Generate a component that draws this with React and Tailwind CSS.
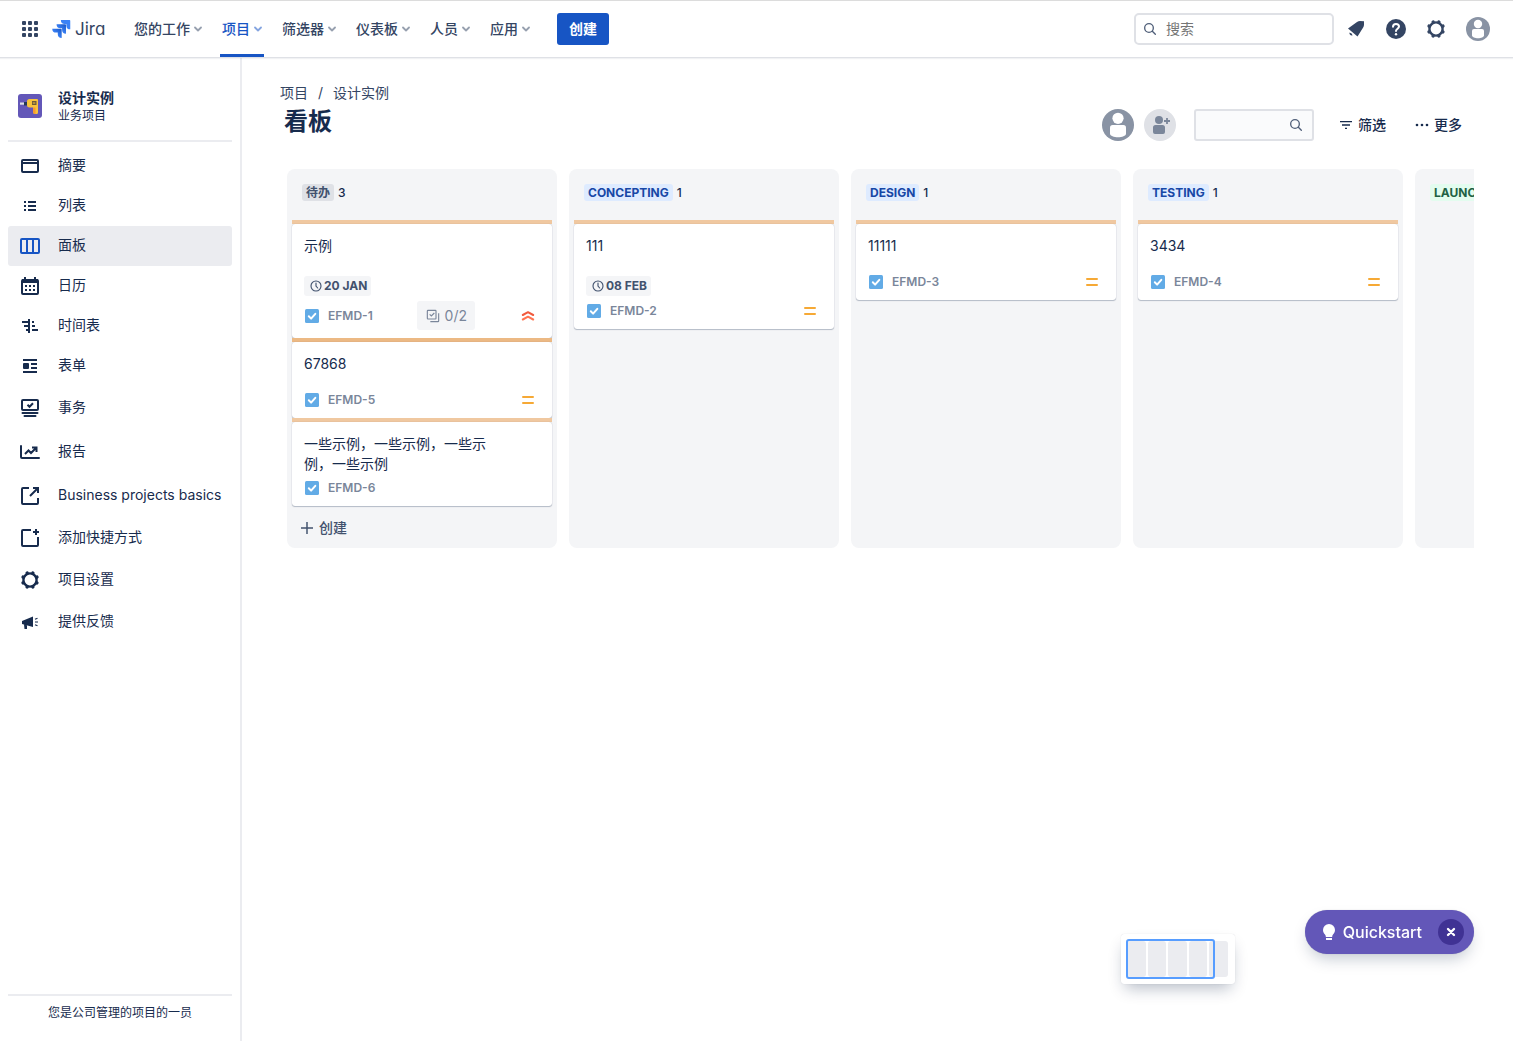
import React, { useState } from "react";

const Svg = ({ size = 24, className = "", children }) => (
  <svg
    width={size}
    height={size}
    viewBox="0 0 24 24"
    fill="none"
    aria-hidden="true"
    className={`shrink-0 ${className}`}
  >
    {children}
  </svg>
);

const SummaryIcon = () => (
  <Svg>
    <rect x="4" y="6" width="16" height="12" rx="1" stroke="currentColor" strokeWidth="2" />
    <path d="M4 9h16" stroke="currentColor" strokeWidth="2" />
    <path d="M5 7.500h1.500M8 7.500h11" stroke="white" strokeWidth="1.200" />
  </Svg>
);

const ListIcon = () => (
  <Svg>
    <path d="M6 8h2M6 12h2M6 16h2M10 8h8M10 12h8M10 16h8" stroke="currentColor" strokeWidth="2" />
  </Svg>
);

const BoardIcon = () => (
  <Svg className="text-[#1755c4]">
    <rect x="3" y="5" width="18" height="14" rx="1" stroke="currentColor" strokeWidth="2" />
    <path d="M9 5v14M15 5v14" stroke="currentColor" strokeWidth="2" />
  </Svg>
);

const CalendarIcon = () => (
  <Svg>
    <rect x="4" y="6" width="16" height="14" rx="1" stroke="currentColor" strokeWidth="2" />
    <path d="M4 5h16v4H4zM6 3h2v3H6zM16 3h2v3h-2z" fill="currentColor" />
    <path d="M7 12h2M11 12h2M15 12h2M7 16h2M11 16h2M15 16h2" stroke="currentColor" strokeWidth="2" />
  </Svg>
);

const TimelineIcon = () => (
  <Svg>
    <path d="M11 5v14M4 8h7M6 12h5M8 16h3M14 8h2M14 12h3M14 16h6" stroke="currentColor" strokeWidth="2" />
  </Svg>
);

const FormIcon = () => (
  <Svg>
    <path d="M5 6h14M5 18h14M13 10h6M13 14h6" stroke="currentColor" strokeWidth="2" />
    <rect x="5" y="9" width="6" height="6" rx="1" fill="currentColor" />
  </Svg>
);

const IssuesIcon = () => (
  <Svg>
    <rect x="4" y="4" width="16" height="10" rx="1" stroke="currentColor" strokeWidth="2" />
    <path d="m9.500 8.800 2 2 3.500-3.500" stroke="currentColor" strokeWidth="2" />
    <path d="M4.500 17h15M6.500 20h11" stroke="currentColor" strokeWidth="2" strokeLinecap="round" />
  </Svg>
);

const ReportsIcon = () => (
  <Svg>
    <path d="M3 6v11a1 1 0 0 0 1 1h17" stroke="currentColor" strokeWidth="2" strokeLinecap="round" />
    <path d="m7 14 3.500-3.500 2.500 2.500 5-5M14 7.500h4.500V12" stroke="currentColor" strokeWidth="2" />
  </Svg>
);

const ExternalIcon = () => (
  <Svg>
    <path d="M11 4H5a1 1 0 0 0-1 1v14a1 1 0 0 0 1 1h14a1 1 0 0 0 1-1v-5" stroke="currentColor" strokeWidth="2" />
    <path d="M15 4h5v5M20 4l-8 8" stroke="currentColor" strokeWidth="2" />
  </Svg>
);

const AddShortcutIcon = () => (
  <Svg>
    <path d="M13 4H5a1 1 0 0 0-1 1v14a1 1 0 0 0 1 1h14a1 1 0 0 0 1-1v-8" stroke="currentColor" strokeWidth="2" />
    <path d="M18 3v6M15 6h6" stroke="currentColor" strokeWidth="2" />
  </Svg>
);

const GearIcon = () => (
  <Svg>
    <circle cx="12" cy="12" r="6.600" stroke="currentColor" strokeWidth="2.400" />
    <circle
      cx="12"
      cy="12"
      r="7.500"
      stroke="currentColor"
      strokeWidth="3.400"
      strokeLinecap="round"
      pathLength="8"
      strokeDasharray="0.010 0.990"
      transform="rotate(22.5 12 12)"
    />
  </Svg>
);

const FeedbackIcon = () => (
  <Svg>
    <path d="M4 11 15 6.500v10.500L4 14zM6 14.500l3 1v3.500H6.500z" fill="currentColor" />
    <path d="M17 12h3M17 9.300l2.500-1M17 14.700l2.500 1" stroke="currentColor" strokeWidth="1.200" />
  </Svg>
);

const SearchIcon = () => (
  <Svg size={16} className="text-[#505f79]">
    <circle cx="10.500" cy="10.500" r="6.500" stroke="currentColor" strokeWidth="2" />
    <path d="m15.500 15.500 4.500 4.500" stroke="currentColor" strokeWidth="2" strokeLinecap="round" />
  </Svg>
);

const ChevronIcon = () => (
  <svg width="8" height="8" viewBox="0 0 8 8" fill="none" aria-hidden="true">
    <path d="m1 2.500 3 3 3-3" stroke="currentColor" strokeWidth="1.800" strokeLinecap="round" strokeLinejoin="round" />
  </svg>
);

const Avatar = ({ size }) => (
  <Svg size={size} className="text-[#8993a4]">
    <circle cx="12" cy="12" r="12" fill="currentColor" />
    <circle cx="12" cy="7" r="4.200" fill="white" />
    <path d="M6 14a2 2 0 0 1 2-2h8a2 2 0 0 1 2 2v4.500c0 1.500-3 2.700-6 2.700s-6-1.200-6-2.700z" fill="white" />
  </Svg>
);

const ProjectIcon = () => (
  <Svg>
    <rect width="24" height="24" rx="3" fill="#6357b8" />
    <path d="M6 8h3v3.500H6z" fill="#253858" />
    <path d="M2 8.500h4v2.200H2z" fill="#dfe1e6" />
    <path
      d="M9 7.500A2.500 2.500 0 0 1 11.500 5H19a1 1 0 0 1 1 1v12.500a1.500 1.500 0 0 1-1.500 1.500H17a2 2 0 0 1-2-2v-4.500h-3.500A2.500 2.500 0 0 1 9 11z"
      fill="#f7c33c"
    />
    <path d="M15 13.500h2.500V20H17a2 2 0 0 1-2-2z" fill="#f79a2e" />
    <path d="M14 7h4.500v4H14z" fill="#6b5b3a" />
    <path d="M14.800 9h2.500" stroke="#f7c33c" strokeWidth="1" />
  </Svg>
);

const TaskIcon = () => (
  <svg width="16" height="16" viewBox="0 0 16 16" fill="none" aria-hidden="true" className="shrink-0">
    <rect x="1" y="1" width="14" height="14" rx="1.500" fill="#62abe6" />
    <path d="m4.800 8.300 2.300 2.300 4.200-4.800" stroke="white" strokeWidth="2" strokeLinecap="round" strokeLinejoin="round" />
  </svg>
);

const Priority = ({ level }) => {
  if (!level) return null;
  return (
    <svg width="16" height="16" viewBox="0 0 16 16" fill="none" role="img" aria-label={level}>
      {level === "highest" ? (
        <>
          <path d="m2.800 7 5.200-2.800 5.200 2.800" stroke="#f15b3e" strokeWidth="2" strokeLinecap="round" strokeLinejoin="round" />
          <path d="m2.800 11.500 5.200-2.800 5.200 2.800" stroke="#ff7452" strokeWidth="2" strokeLinecap="round" strokeLinejoin="round" />
        </>
      ) : (
        <path d="M3 5h10M3 11h10" stroke="#f6a935" strokeWidth="2" strokeLinecap="round" />
      )}
    </svg>
  );
};

const topNav = [
  { label: "您的工作" },
  { label: "项目", active: true },
  { label: "筛选器" },
  { label: "仪表板" },
  { label: "人员" },
  { label: "应用" },
];

const views = [
  { label: "摘要", icon: SummaryIcon },
  { label: "列表", icon: ListIcon },
  { label: "面板", icon: BoardIcon },
  { label: "日历", icon: CalendarIcon },
  { label: "时间表", icon: TimelineIcon },
  { label: "表单", icon: FormIcon },
];

const tools = [
  { label: "事务", icon: IssuesIcon },
  { label: "报告", icon: ReportsIcon },
  { label: "Business projects basics", icon: ExternalIcon },
];

const extras = [
  { label: "添加快捷方式", icon: AddShortcutIcon },
  { label: "项目设置", icon: GearIcon },
  { label: "提供反馈", icon: FeedbackIcon },
];

const columns = [
  {
    name: "待办",
    tone: "bg-[#dfe1e6] text-[#42526e]",
    canCreate: true,
    cards: [
      { id: "EFMD-1", title: "示例", due: "20 JAN", subtasks: "0/2", priority: "highest", bar: "bg-[#f0c8a0]" },
      { id: "EFMD-5", title: "67868", priority: "medium", bar: "bg-[#ecb984]" },
      { id: "EFMD-6", title: "一些示例，一些示例，一些示例，一些示例", long: true, bar: "bg-[#f0c8a0]" },
    ],
  },
  {
    name: "CONCEPTING",
    tone: "bg-[#deebff] text-[#1747a6]",
    cards: [{ id: "EFMD-2", title: "111", due: "08 FEB", priority: "medium", bar: "bg-[#f0c8a0]" }],
  },
  {
    name: "DESIGN",
    tone: "bg-[#deebff] text-[#1747a6]",
    cards: [{ id: "EFMD-3", title: "11111", priority: "medium", bar: "bg-[#f0c8a0]" }],
  },
  {
    name: "TESTING",
    tone: "bg-[#deebff] text-[#1747a6]",
    cards: [{ id: "EFMD-4", title: "3434", priority: "medium", bar: "bg-[#f0c8a0]" }],
  },
  { name: "LAUNCH", tone: "bg-[#e3fcef] text-[#216144]", cards: [] },
];

const Header = () => (
  <header className="relative z-10 flex h-[58px] items-stretch border-t border-b border-t-[#dcdcdc] border-b-[#dfe1e6] bg-white pr-[19px] pl-[18px] text-[#344563] shadow-[0_1px_1px_rgba(9,30,66,0.06)]">
    <button aria-label="切换到" className="flex w-6 items-center justify-center">
      <Svg>
        <g fill="currentColor">
          {[4, 10, 16].map((y) =>
            [4, 10, 16].map((x) => <rect key={`${x}-${y}`} x={x} y={y} width="4" height="4" rx="1" />)
          )}
        </g>
      </Svg>
    </button>
    <a href="#" className="ml-2.5 flex w-[54px] items-center gap-[3px]">
      <svg width="20" height="18" viewBox="0 0 26 24" aria-hidden="true" className="shrink-0">
        <defs>
          <linearGradient id="jira-fade" x1="1" y1="0" x2="0.400" y2="0.600">
            <stop offset="0" stopColor="#1755c4" />
            <stop offset="1" stopColor="#3b82f6" />
          </linearGradient>
        </defs>
        <path
          fill="url(#jira-fade)"
          d="M11.571 11.513H0a5.218 5.218 0 0 0 5.232 5.215h2.130v2.057A5.215 5.215 0 0 0 12.575 24V12.518a1.005 1.005 0 0 0-1.005-1.005z"
        />
        <path
          fill="url(#jira-fade)"
          d="M17.294 5.757H5.736a5.215 5.215 0 0 0 5.215 5.214h2.129v2.058a5.218 5.218 0 0 0 5.215 5.214V6.758a1.001 1.001 0 0 0-1.001-1.001z"
        />
        <path
          fill="#3b82f6"
          d="M23.013 0H11.455a5.215 5.215 0 0 0 5.215 5.215h2.129v2.057A5.215 5.215 0 0 0 24 12.483V1.005A1.001 1.001 0 0 0 23.013 0Z"
        />
      </svg>
      <span className="text-[17px] leading-6 [font-feature-settings:'cv11']">Jira</span>
    </a>
    <nav className="ml-[26px] flex gap-4">
      {topNav.map((item) => (
        <button
          key={item.label}
          className={`flex items-center gap-1 border-b-3 px-0.5 pt-[3px] text-sm font-medium whitespace-nowrap ${
            item.active ? "border-[#1755c4] text-[#1755c4]" : "border-transparent"
          }`}
        >
          {item.label}
          <span className={item.active ? "text-[#85a5e0]" : "text-[#97a0af]"}>
            <ChevronIcon />
          </span>
        </button>
      ))}
    </nav>
    <button className="ml-[25px] h-8 self-center rounded-[3px] bg-[#1755c4] px-3 text-sm font-semibold whitespace-nowrap text-white">
      创建
    </button>
    <div className="ml-auto flex items-center gap-2">
      <label className="-mr-0.5 flex h-8 w-[200px] items-center gap-2 rounded-[5px] border-2 border-[#dfe1e6] px-1.5">
        <SearchIcon />
        <input
          type="text"
          aria-label="搜索"
          placeholder="搜索"
          className="w-full min-w-0 bg-transparent text-sm outline-none placeholder:text-[#757575]"
        />
      </label>
      <button aria-label="通知" className="flex size-8 items-center justify-center">
        <Svg>
          <path d="M4 11.500 13 5c1-.8 2-1 3-1l4 .3v3.500c0 1-.3 2-1 3l-5.500 8.700z" fill="currentColor" />
          <path d="M5.500 15.500c-.5 1.500 1 3.500 3 3l-.6-1.800z" fill="currentColor" />
        </Svg>
      </button>
      <button aria-label="帮助" className="flex size-8 items-center justify-center">
        <Svg>
          <circle cx="12" cy="12" r="10" fill="currentColor" />
          <path
            d="M9 9.800C9 8 10.300 7 12 7s3 1.100 3 2.600c0 2-3 2.200-3 4.400"
            stroke="white"
            strokeWidth="2"
            strokeLinecap="round"
          />
          <circle cx="12" cy="17.200" r="1.200" fill="white" />
        </Svg>
      </button>
      <button aria-label="设置" className="flex size-8 items-center justify-center">
        <GearIcon />
      </button>
      <button aria-label="个人资料" className="ml-0.5 flex size-8 items-center justify-center">
        <Avatar size={24} />
      </button>
    </div>
  </header>
);

const SideItem = ({ item, active, onSelect, height }) => {
  const Icon = item.icon;
  return (
    <li>
      <a
        href="#"
        onClick={onSelect}
        className={`flex items-center gap-4 rounded-[3px] px-2.5 text-sm ${height} ${active ? "bg-[#ebecf0]" : ""}`}
      >
        <Icon />
        <span className="pb-0.5 whitespace-nowrap">{item.label}</span>
      </a>
    </li>
  );
};

const Sidebar = () => {
  const [view, setView] = useState("面板");

  return (
    <aside className="flex w-[242px] shrink-0 flex-col border-r-2 border-[#ebecf0] px-2">
      <div className="flex items-center gap-4 px-2.5 pt-[30px] pb-4">
        <ProjectIcon />
        <div>
          <p className="text-sm leading-5 font-semibold">设计实例</p>
          <p className="text-xs leading-4">业务项目</p>
        </div>
      </div>
      <nav className="border-t-2 border-[#ebecf0] pt-1">
        <ul>
          {views.map((item) => (
            <SideItem
              key={item.label}
              item={item}
              height="h-10"
              active={item.label === view}
              onSelect={() => setView(item.label)}
            />
          ))}
        </ul>
        <ul>
          {tools.map((item) => (
            <SideItem key={item.label} item={item} height="h-11" />
          ))}
        </ul>
        <ul className="flex flex-col gap-0.5">
          {extras.map((item) => (
            <SideItem key={item.label} item={item} height="h-10" />
          ))}
        </ul>
      </nav>
      <p className="mt-auto border-t-2 border-[#ebecf0] pt-2 pb-5 text-center text-xs leading-[17px]">
        您是公司管理的项目的一员
      </p>
    </aside>
  );
};

const Card = ({ card }) => (
  <li>
    <div className={`h-1 ${card.bar}`} />
    <article className="rounded-[3px] bg-white px-3 pt-3 pb-2 shadow-[0_1px_1px_rgba(9,30,66,0.25),0_0_1px_rgba(9,30,66,0.3)]">
      <h3 className={`pr-10 text-sm leading-5 ${card.long ? "mb-1" : card.due ? "mb-5" : "mb-4"}`}>{card.title}</h3>
      {card.due && (
        <span className="mb-[5px] flex h-5 w-fit items-center rounded-[3px] bg-[#f4f5f7] px-1 text-xs font-bold text-[#42526e]">
          <Svg size={16}>
            <circle cx="12" cy="12" r="7.500" stroke="currentColor" strokeWidth="1.700" />
            <path d="M12 7.500V12l2.500 3" stroke="currentColor" strokeWidth="1.700" strokeLinecap="round" />
          </Svg>
          {card.due}
        </span>
      )}
      <div className={`flex items-center ${card.subtasks ? "h-[29px]" : "h-5"}`}>
        <TaskIcon />
        <a href="#" className="ml-2 text-xs font-semibold text-[#7a869a]">
          {card.id}
        </a>
        {card.subtasks && (
          <span className="mr-[45px] ml-auto flex h-full items-center gap-1 rounded-[3px] bg-[#f4f5f7] px-2 text-sm text-[#7a869a]">
            <Svg size={16}>
              <rect x="3.500" y="3.500" width="13" height="13" rx="1" stroke="currentColor" strokeWidth="1.700" />
              <path d="m7 9.500 2.500 2.500L14 7.500M20.500 8v11.500a1 1 0 0 1-1 1H8" stroke="currentColor" strokeWidth="1.700" />
            </Svg>
            {card.subtasks}
          </span>
        )}
        <span className={card.subtasks ? "mr-1" : "mr-1 ml-auto"}>
          <Priority level={card.priority} />
        </span>
      </div>
    </article>
  </li>
);

const Column = ({ column }) => (
  <section className="flex w-[270px] shrink-0 flex-col rounded-lg bg-[#f4f5f7] px-[5px] pb-1">
    <h2 className="flex h-[51px] items-center gap-1 px-2.5 pb-1 text-xs">
      <span className={`rounded-[3px] px-1 leading-[17px] font-bold ${column.tone}`}>{column.name}</span>
      {column.cards.length > 0 && <span className="font-medium">{column.cards.length}</span>}
    </h2>
    <ul>
      {column.cards.map((card) => (
        <Card key={card.id} card={card} />
      ))}
    </ul>
    {column.canCreate && (
      <button className="mt-1.5 flex h-8 items-center gap-1 px-[7px] text-sm font-medium text-[#42526e]">
        <Svg size={16}>
          <path d="M12 3v18M3 12h18" stroke="currentColor" strokeWidth="2.200" />
        </Svg>
        创建
      </button>
    )}
  </section>
);

const Toolbar = () => (
  <div className="flex h-8 items-center">
    <button aria-label="成员">
      <Avatar size={32} />
    </button>
    <button
      aria-label="添加人员"
      className="ml-2.5 flex size-8 items-center justify-center rounded-full bg-[#dfe1e6] text-[#7a869a]"
    >
      <Svg>
        <circle cx="11" cy="7" r="4" fill="currentColor" />
        <path
          d="M5 14.500a2.500 2.500 0 0 1 2.500-2.500h7a2.500 2.500 0 0 1 2.500 2.500V19a2 2 0 0 1-2 2H7a2 2 0 0 1-2-2z"
          fill="currentColor"
        />
        <path d="M19 5v6M16 8h6" stroke="currentColor" strokeWidth="1.800" />
      </Svg>
    </button>
    <label className="ml-[18px] flex h-8 w-[120px] items-center rounded-[3px] border-2 border-[#dfe1e6] bg-[#fafbfc] px-2">
      <input type="text" aria-label="搜索面板" className="w-full min-w-0 bg-transparent text-sm outline-none" />
      <SearchIcon />
    </label>
    <button className="ml-6 flex items-center gap-1 text-sm font-medium whitespace-nowrap">
      <Svg size={16}>
        <path d="M3 7h18M6 12h12M10.500 17h3" stroke="currentColor" strokeWidth="2" />
      </Svg>
      筛选
    </button>
    <button className="mr-3 ml-7 flex items-center gap-1 text-sm font-medium whitespace-nowrap">
      <Svg size={16}>
        <g fill="currentColor">
          <circle cx="4.500" cy="12" r="2" />
          <circle cx="12" cy="12" r="2" />
          <circle cx="19.500" cy="12" r="2" />
        </g>
      </Svg>
      更多
    </button>
  </div>
);

const Minimap = () => (
  <div className="fixed right-[278px] bottom-[57px] h-[50px] w-[114px] rounded-[3px] bg-white p-[7px] pl-1.5 shadow-[0_8px_16px_-4px_rgba(9,30,66,0.3),0_0_1px_rgba(9,30,66,0.2)]">
    <div className="flex h-full gap-0.5">
      {columns.map((column) => (
        <div key={column.name} className="flex-1 rounded-[3px] bg-[#ebecf0]" />
      ))}
    </div>
    <div className="absolute top-[5px] left-[5px] h-10 w-[89px] rounded-[3px] border-2 border-[#579dff]" />
  </div>
);

const Quickstart = () => {
  const [open, setOpen] = useState(true);
  if (!open) return null;

  return (
    <div className="fixed right-[39px] bottom-[87px] flex h-11 items-center rounded-full bg-[#6357b8] pr-2.5 pl-3 text-white shadow-[0_8px_16px_-4px_rgba(9,30,66,0.25),0_0_1px_rgba(9,30,66,0.3)]">
      <button className="flex items-center gap-0.5 text-base font-medium">
        <Svg>
          <path
            d="M12 4a6 6 0 0 0-6 6c0 2.200 1.200 3.500 2 4.600.5.700.8 1.200.8 1.900V17h6.400v-.5c0-.7.300-1.200.8-1.900.8-1.100 2-2.400 2-4.600a6 6 0 0 0-6-6zM9 18h6v1.500a.5.500 0 0 1-.5.500h-5a.5.500 0 0 1-.5-.5z"
            fill="currentColor"
          />
        </Svg>
        Quickstart
      </button>
      <button
        aria-label="关闭"
        onClick={() => setOpen(false)}
        className="ml-4 flex size-[26px] items-center justify-center rounded-full bg-[#403294]"
      >
        <Svg size={16}>
          <path d="m7.500 7.500 9 9M16.500 7.500l-9 9" stroke="currentColor" strokeWidth="3.500" strokeLinecap="round" />
        </Svg>
      </button>
    </div>
  );
};

const App = () => {
  return (
    <div className="flex min-h-screen flex-col bg-white font-['Inter','Noto_Sans_CJK_SC',sans-serif] text-[#172b4d]">
      <Header />
      <div className="flex flex-1">
        <Sidebar />
        <main className="min-w-0 flex-1 pt-[25px] pr-[39px] pl-[38px]">
          <div className="flex items-end justify-between">
            <div className="pb-1">
              <nav className="flex gap-2.5 text-sm leading-5 text-[#344563]">
                <a href="#">项目</a>
                <span>/</span>
                <a href="#">设计实例</a>
              </nav>
              <h1 className="mt-1 ml-1 text-2xl leading-[30px] font-semibold">看板</h1>
            </div>
            <Toolbar />
          </div>
          {/* columns past the right edge scroll into view */}
          <div className="mt-7 ml-[7px] flex gap-3 overflow-x-auto [scrollbar-width:none]">
            {columns.map((column) => (
              <Column key={column.name} column={column} />
            ))}
          </div>
        </main>
      </div>
      <Minimap />
      <Quickstart />
    </div>
  );
};

export default App;
